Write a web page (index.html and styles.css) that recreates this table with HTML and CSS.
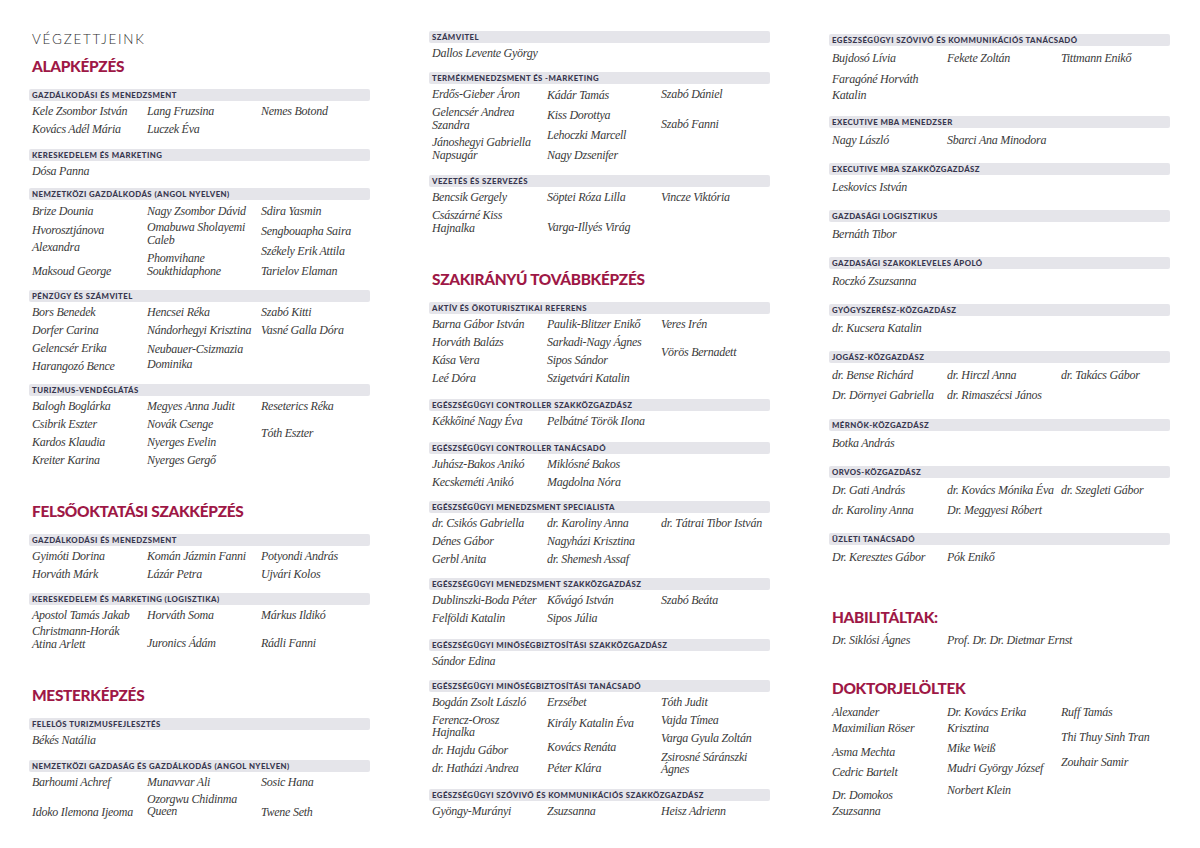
FILE: index.html
```html
<!DOCTYPE html>
<html lang="hu">
<head>
<meta charset="utf-8">
<title>Végzettjeink</title>
<link rel="stylesheet" href="styles.css">
</head>
<body>
<div class="page">

  <div class="col col-l">
    <div class="kicker">VÉGZETTJEINK</div>
    <h2 class="h mt9">ALAPKÉPZÉS</h2>

    <section class="sec">
      <div class="bar">GAZDÁLKODÁSI ÉS MENEDZSMENT</div>
      <div class="names">
        <div class="nc"><span class="n">Kele Zsombor István</span><span class="n">Kovács Adél Mária</span></div>
        <div class="nc"><span class="n">Lang Fruzsina</span><span class="n">Luczek Éva</span></div>
        <div class="nc"><span class="n">Nemes Botond</span></div>
      </div>
    </section>

    <section class="sec mt11">
      <div class="bar">KERESKEDELEM ÉS MARKETING</div>
      <div class="names">
        <div class="nc"><span class="n">Dósa Panna</span></div>
      </div>
    </section>

    <section class="sec mt8 lh20">
      <div class="bar">NEMZETKÖZI GAZDÁLKODÁS (ANGOL NYELVEN)</div>
      <div class="names">
        <div class="nc"><span class="n">Brize Dounia</span><span class="n n2 l17 mt1">Hvorosztjánova<br>Alexandra</span><span class="n mt5">Maksoud George</span></div>
        <div class="nc"><span class="n">Nagy Zsombor Dávid</span><span class="n n2">Omabuwa Sholayemi<br>Caleb</span><span class="n n2 mt5">Phomvihane<br>Soukthidaphone</span></div>
        <div class="nc"><span class="n">Sdira Yasmin</span><span class="n">Sengbouapha Saira</span><span class="n">Székely Erik Attila</span><span class="n">Tarielov Elaman</span></div>
      </div>
    </section>

    <section class="sec mt9">
      <div class="bar">PÉNZÜGY ÉS SZÁMVITEL</div>
      <div class="names">
        <div class="nc"><span class="n">Bors Benedek</span><span class="n">Dorfer Carina</span><span class="n">Gelencsér Erika</span><span class="n">Harangozó Bence</span></div>
        <div class="nc"><span class="n">Hencsei Réka</span><span class="n">Nándorhegyi Krisztina</span><span class="n n2 l15 mt3">Neubauer-Csizmazia<br>Dominika</span></div>
        <div class="nc"><span class="n">Szabó Kitti</span><span class="n">Vasné Galla Dóra</span></div>
      </div>
    </section>

    <section class="sec mt9">
      <div class="bar">TURIZMUS-VENDÉGLÁTÁS</div>
      <div class="names">
        <div class="nc"><span class="n">Balogh Boglárka</span><span class="n">Csibrik Eszter</span><span class="n">Kardos Klaudia</span><span class="n">Kreiter Karina</span></div>
        <div class="nc"><span class="n">Megyes Anna Judit</span><span class="n">Novák Csenge</span><span class="n">Nyerges Evelin</span><span class="n">Nyerges Gergő</span></div>
        <div class="nc"><span class="n">Reseterics Réka</span><span class="n mt9">Tóth Eszter</span></div>
      </div>
    </section>

    <h2 class="h mt32">FELSŐOKTATÁSI SZAKKÉPZÉS</h2>

    <section class="sec">
      <div class="bar">GAZDÁLKODÁSI ÉS MENEDZSMENT</div>
      <div class="names">
        <div class="nc"><span class="n">Gyimóti Dorina</span><span class="n">Horváth Márk</span></div>
        <div class="nc"><span class="n">Komán Jázmin Fanni</span><span class="n">Lázár Petra</span></div>
        <div class="nc"><span class="n">Potyondi András</span><span class="n">Ujvári Kolos</span></div>
      </div>
    </section>

    <section class="sec mt10">
      <div class="bar">KERESKEDELEM ÉS MARKETING (LOGISZTIKA)</div>
      <div class="names">
        <div class="nc"><span class="n">Apostol Tamás Jakab</span><span class="n n2 mt1">Christmann-Horák<br>Atina Arlett</span></div>
        <div class="nc"><span class="n">Horváth Soma</span><span class="n mt10">Juronics Ádám</span></div>
        <div class="nc"><span class="n">Márkus Ildikó</span><span class="n mt10">Rádli Fanni</span></div>
      </div>
    </section>

    <h2 class="h mt33">MESTERKÉPZÉS</h2>

    <section class="sec">
      <div class="bar">FELELŐS TURIZMUSFEJLESZTÉS</div>
      <div class="names">
        <div class="nc"><span class="n">Békés Natália</span></div>
      </div>
    </section>

    <section class="sec mt11">
      <div class="bar">NEMZETKÖZI GAZDASÁG ÉS GAZDÁLKODÁS (ANGOL NYELVEN)</div>
      <div class="names">
        <div class="nc"><span class="n">Barhoumi Achref</span><span class="n mt12">Idoko Ilemona Ijeoma</span></div>
        <div class="nc"><span class="n">Munavvar Ali</span><span class="n n2 l12 mt2">Ozorgwu Chidinma<br>Queen</span></div>
        <div class="nc"><span class="n">Sosic Hana</span><span class="n mt12">Twene Seth</span></div>
      </div>
    </section>
  </div>

  <div class="col col-m">
    <section class="sec">
      <div class="bar">SZÁMVITEL</div>
      <div class="names">
        <div class="nc"><span class="n">Dallos Levente György</span></div>
      </div>
    </section>

    <section class="sec mt10">
      <div class="bar">TERMÉKMENEDZSMENT ÉS -MARKETING</div>
      <div class="names">
        <div class="nc"><span class="n">Erdős-Gieber Áron</span><span class="n n2 mt3">Gelencsér Andrea<br>Szandra</span><span class="n n2 mt4">Jánoshegyi Gabriella<br>Napsugár</span></div>
        <div class="nc lh20"><span class="n">Kádár Tamás</span><span class="n">Kiss Dorottya</span><span class="n">Lehoczki Marcell</span><span class="n">Nagy Dzsenifer</span></div>
        <div class="nc"><span class="n">Szabó Dániel</span><span class="n mt12">Szabó Fanni</span></div>
      </div>
    </section>

    <section class="sec mt10">
      <div class="bar">VEZETÉS ÉS SZERVEZÉS</div>
      <div class="names">
        <div class="nc"><span class="n">Bencsik Gergely</span><span class="n n2 mt3">Császárné Kiss<br>Hajnalka</span></div>
        <div class="nc"><span class="n">Söptei Róza Lilla</span><span class="n mt12">Varga-Illyés Virág</span></div>
        <div class="nc"><span class="n">Vincze Viktória</span></div>
      </div>
    </section>

    <h2 class="h mt33">SZAKIRÁNYÚ TOVÁBBKÉPZÉS</h2>

    <section class="sec">
      <div class="bar">AKTÍV ÉS ÖKOTURISZTIKAI REFERENS</div>
      <div class="names">
        <div class="nc"><span class="n">Barna Gábor István</span><span class="n">Horváth Balázs</span><span class="n">Kása Vera</span><span class="n">Leé Dóra</span></div>
        <div class="nc"><span class="n">Paulik-Blitzer Enikő</span><span class="n">Sarkadi-Nagy Ágnes</span><span class="n">Sipos Sándor</span><span class="n">Szigetvári Katalin</span></div>
        <div class="nc"><span class="n">Veres Irén</span><span class="n mt10">Vörös Bernadett</span></div>
      </div>
    </section>

    <section class="sec mt12">
      <div class="bar">EGÉSZSÉGÜGYI CONTROLLER SZAKKÖZGAZDÁSZ</div>
      <div class="names">
        <div class="nc"><span class="n">Kékkőiné Nagy Éva</span></div>
        <div class="nc"><span class="n">Pelbátné Török Ilona</span></div>
      </div>
    </section>

    <section class="sec mt12">
      <div class="bar">EGÉSZSÉGÜGYI CONTROLLER TANÁCSADÓ</div>
      <div class="names">
        <div class="nc"><span class="n">Juhász-Bakos Anikó</span><span class="n">Kecskeméti Anikó</span></div>
        <div class="nc"><span class="n">Miklósné Bakos<br>Magdolna Nóra</span></div>
      </div>
    </section>

    <section class="sec mt10">
      <div class="bar">EGÉSZSÉGÜGYI MENEDZSMENT SPECIALISTA</div>
      <div class="names">
        <div class="nc"><span class="n">dr. Csikós Gabriella</span><span class="n">Dénes Gábor</span><span class="n">Gerbl Anita</span></div>
        <div class="nc"><span class="n">dr. Karoliny Anna</span><span class="n">Nagyházi Krisztina</span><span class="n">dr. Shemesh Assaf</span></div>
        <div class="nc"><span class="n">dr. Tátrai Tibor István</span></div>
      </div>
    </section>

    <section class="sec mt10">
      <div class="bar">EGÉSZSÉGÜGYI MENEDZSMENT SZAKKÖZGAZDÁSZ</div>
      <div class="names">
        <div class="nc"><span class="n">Dublinszki-Boda Péter</span><span class="n">Felföldi Katalin</span></div>
        <div class="nc"><span class="n">Kővágó István</span><span class="n">Sipos Júlia</span></div>
        <div class="nc"><span class="n">Szabó Beáta</span></div>
      </div>
    </section>

    <section class="sec mt12">
      <div class="bar">EGÉSZSÉGÜGYI MINŐSÉGBIZTOSÍTÁSI SZAKKÖZGAZDÁSZ</div>
      <div class="names">
        <div class="nc"><span class="n">Sándor Edina</span></div>
      </div>
    </section>

    <section class="sec mt10">
      <div class="bar">EGÉSZSÉGÜGYI MINŐSÉGBIZTOSÍTÁSI TANÁCSADÓ</div>
      <div class="names">
        <div class="nc"><span class="n">Bogdán Zsolt László</span><span class="n n2 l12 mt3">Ferencz-Orosz<br>Hajnalka</span><span class="n mt3">dr. Hajdu Gábor</span><span class="n">dr. Hatházi Andrea</span></div>
        <div class="nc"><span class="n">Erzsébet</span><span class="n mt3">Király Katalin Éva</span><span class="n mt6">Kovács Renáta</span><span class="n mt3">Péter Klára</span></div>
        <div class="nc"><span class="n">Tóth Judit</span><span class="n">Vajda Tímea</span><span class="n">Varga Gyula Zoltán</span><span class="n n2 l12 mt4">Zsirosné Sáránszki<br>Ágnes</span></div>
      </div>
    </section>

    <section class="sec mt12">
      <div class="bar">EGÉSZSÉGÜGYI SZÓVIVŐ ÉS KOMMUNIKÁCIÓS SZAKKÖZGAZDÁSZ</div>
      <div class="names">
        <div class="nc"><span class="n">Gyöngy-Murányi</span></div>
        <div class="nc"><span class="n">Zsuzsanna</span></div>
        <div class="nc"><span class="n">Heisz Adrienn</span></div>
      </div>
    </section>
  </div>

  <div class="col col-r">
    <section class="sec">
      <div class="bar">EGÉSZSÉGÜGYI SZÓVIVŐ ÉS KOMMUNIKÁCIÓS TANÁCSADÓ</div>
      <div class="names">
        <div class="nc"><span class="n">Bujdosó Lívia</span><span class="n n2 l16 mt3">Faragóné Horváth<br>Katalin</span></div>
        <div class="nc"><span class="n">Fekete Zoltán</span></div>
        <div class="nc"><span class="n">Tittmann Enikő</span></div>
      </div>
    </section>

    <section class="sec mt13">
      <div class="bar">EXECUTIVE MBA MENEDZSER</div>
      <div class="names">
        <div class="nc"><span class="n">Nagy László</span></div>
        <div class="nc"><span class="n">Sbarci Ana Minodora</span></div>
      </div>
    </section>

    <section class="sec mt13">
      <div class="bar">EXECUTIVE MBA SZAKKÖZGAZDÁSZ</div>
      <div class="names">
        <div class="nc"><span class="n">Leskovics István</span></div>
      </div>
    </section>

    <section class="sec mt13">
      <div class="bar">GAZDASÁGI LOGISZTIKUS</div>
      <div class="names">
        <div class="nc"><span class="n">Bernáth Tibor</span></div>
      </div>
    </section>

    <section class="sec mt13">
      <div class="bar">GAZDASÁGI SZAKOKLEVELES ÁPOLÓ</div>
      <div class="names">
        <div class="nc"><span class="n">Roczkó Zsuzsanna</span></div>
      </div>
    </section>

    <section class="sec mt13">
      <div class="bar">GYÓGYSZERÉSZ-KÖZGAZDÁSZ</div>
      <div class="names">
        <div class="nc"><span class="n">dr. Kucsera Katalin</span></div>
      </div>
    </section>

    <section class="sec mt13">
      <div class="bar">JOGÁSZ-KÖZGAZDÁSZ</div>
      <div class="names">
        <div class="nc"><span class="n">dr. Bense Richárd</span><span class="n">Dr. Dörnyei Gabriella</span></div>
        <div class="nc"><span class="n">dr. Hirczl Anna</span><span class="n">dr. Rimaszécsi János</span></div>
        <div class="nc"><span class="n">dr. Takács Gábor</span></div>
      </div>
    </section>

    <section class="sec mt14">
      <div class="bar">MÉRNÖK-KÖZGAZDÁSZ</div>
      <div class="names">
        <div class="nc"><span class="n">Botka András</span></div>
      </div>
    </section>

    <section class="sec mt13">
      <div class="bar">ORVOS-KÖZGAZDÁSZ</div>
      <div class="names">
        <div class="nc"><span class="n">Dr. Gati András</span><span class="n">dr. Karoliny Anna</span></div>
        <div class="nc"><span class="n">dr. Kovács Mónika Éva</span><span class="n">Dr. Meggyesi Róbert</span></div>
        <div class="nc"><span class="n">dr. Szegleti Gábor</span></div>
      </div>
    </section>

    <section class="sec mt13">
      <div class="bar">ÜZLETI TANÁCSADÓ</div>
      <div class="names">
        <div class="nc"><span class="n">Dr. Keresztes Gábor</span></div>
        <div class="nc"><span class="n">Pók Enikő</span></div>
      </div>
    </section>

    <h2 class="h mt40 mb0">HABILITÁLTAK:</h2>
    <div class="names mt1">
      <div class="nc"><span class="n">Dr. Siklósi Ágnes</span></div>
      <div class="nc"><span class="n">Prof. Dr. Dr. Dietmar Ernst</span></div>
    </div>

    <h2 class="h mt28 mb0">DOKTORJELÖLTEK</h2>
    <div class="names mt4">
      <div class="nc"><span class="n n2 l16">Alexander<br>Maximilian Röser</span><span class="n mt6">Asma Mechta</span><span class="n">Cedric Bartelt</span><span class="n n2 l16 mt5">Dr. Domokos<br>Zsuzsanna</span></div>
      <div class="nc"><span class="n n2 l16">Dr. Kovács Erika<br>Krisztina</span><span class="n mt2">Mike Weiß</span><span class="n">Mudri György József</span><span class="n mt2">Norbert Klein</span></div>
      <div class="nc"><span class="n l16">Ruff Tamás</span><span class="n mt7">Thi Thuy Sinh Tran</span><span class="n mt5">Zouhair Samir</span></div>
    </div>
  </div>

</div>
</body>
</html>
```

FILE: styles.css
```css
html, body {
  margin: 0;
  padding: 0;
  background: #ffffff;
}

body {
  font-family: "Lato", "Liberation Sans", sans-serif;
  color: #333333;
}

.page {
  display: flex;
  gap: 59px;
  padding-left: 29px;
  width: 1200px;
  height: 848px;
  box-sizing: border-box;
  overflow: hidden;
}

.col {
  width: 341px;
  flex: 0 0 341px;
  display: flex;
  flex-direction: column;
}

.col-l { padding-top: 31px; }
.col-m { padding-top: 31px; }
.col-r { padding-top: 34px; }

.kicker {
  font-family: "Lato", "Liberation Sans", sans-serif;
  font-weight: 300;
  font-size: 13.5px;
  line-height: 16px;
  letter-spacing: 1.75px;
  color: #2e2e2e;
  padding-left: 3px;
}

.h {
  margin: 0 0 13px 0;
  padding-left: 3px;
  font-family: "Lato", "Liberation Sans", sans-serif;
  font-weight: 900;
  font-size: 15.4px;
  line-height: 20px;
  letter-spacing: -0.3px;
  color: #9e1846;
}

.h.mb0 { margin-bottom: 0; }

.sec { display: block; }

.bar {
  height: 12px;
  line-height: 12px;
  background: #e5e5ea;
  border-radius: 2px;
  padding-left: 3px;
  font-family: "Lato", "Liberation Sans", sans-serif;
  font-weight: 900;
  font-size: 7.8px;
  letter-spacing: 0.45px;
  color: #38374f;
  white-space: nowrap;
  overflow: hidden;
}

.names {
  display: grid;
  grid-template-columns: 115px 114px 1fr;
  padding-left: 3px;
  padding-top: 1px;
}

.col-r .names { padding-top: 2px; }

.nc {
  display: flex;
  flex-direction: column;
  align-items: flex-start;
  min-width: 0;
}

.n {
  display: block;
  white-space: nowrap;
  font-family: "Liberation Serif", "DejaVu Serif", serif;
  font-style: italic;
  font-size: 12px;
  line-height: 18px;
  letter-spacing: -0.25px;
  color: #3a3a3a;
}

.col-r .n { line-height: 20px; }
.lh20 .n { line-height: 20px; }

.n.n2 { line-height: 13px; }
.n.l12 { line-height: 12px; }
.n.l15 { line-height: 15px; }
.n.l16 { line-height: 16px; }
.n.l17 { line-height: 17px; }

.mt1 { margin-top: 1px; }
.mt2 { margin-top: 2px; }
.mt3 { margin-top: 3px; }
.mt4 { margin-top: 4px; }
.mt5 { margin-top: 5px; }
.mt6 { margin-top: 6px; }
.mt7 { margin-top: 7px; }
.mt8 { margin-top: 8px; }
.mt9 { margin-top: 9px; }
.mt10 { margin-top: 10px; }
.mt11 { margin-top: 11px; }
.mt12 { margin-top: 12px; }
.mt13 { margin-top: 13px; }
.mt14 { margin-top: 14px; }
.mt28 { margin-top: 28px; }
.mt32 { margin-top: 32px; }
.mt33 { margin-top: 33px; }
.mt40 { margin-top: 40px; }
```
